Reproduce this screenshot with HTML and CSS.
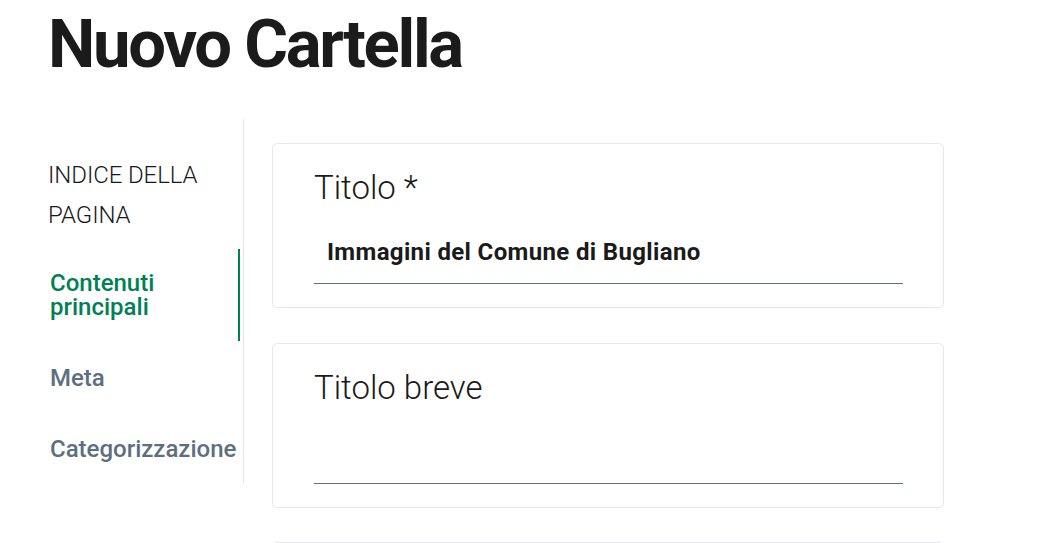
FILE: index.html
```html
<!DOCTYPE html>
<html lang="it">
<head>
<meta charset="utf-8">
<title>Nuovo Cartella</title>
<link rel="stylesheet" href="styles.css">
</head>
<body>
<div class="page">
  <h1 class="page-title">Nuovo Cartella</h1>
  <div class="layout">
    <nav class="toc">
      <div class="toc-title">INDICE DELLA PAGINA</div>
      <ul class="toc-list">
        <li class="toc-item active">Contenuti principali</li>
        <li class="toc-item">Meta</li>
        <li class="toc-item">Categorizzazione</li>
      </ul>
    </nav>
    <main class="fields">
      <section class="card">
        <label class="field-label">Titolo *</label>
        <input class="field-input" type="text" value="Immagini del Comune di Bugliano">
      </section>
      <section class="card">
        <label class="field-label">Titolo breve</label>
        <input class="field-input" type="text" value="">
      </section>
      <section class="card card-next"></section>
    </main>
  </div>
</div>
</body>
</html>
```

FILE: styles.css
```css
* { box-sizing: border-box; }
html, body { margin: 0; padding: 0; background: #fff; }
body {
  font-family: Roboto, "Liberation Sans", sans-serif;
  color: #1a1a1a;
  height: 543px;
  overflow: hidden;
}
.page { padding: 0 48px; }
.page-title {
  margin: 4px 0 0;
  font-size: 67px;
  line-height: 80px;
  font-weight: 700;
  letter-spacing: -2.3px;
  color: #1b1b1b;
}
.layout {
  display: flex;
  margin-top: 35px;
  align-items: flex-start;
}
.toc {
  width: 196px;
  flex: none;
  border-right: 1px solid #e1e2ee;
  padding: 36px 3px 0 0;
  height: 364px;
}
.toc-title {
  font-size: 24px;
  font-weight: 300;
  line-height: 40px;
  color: #1a1a1a;
  letter-spacing: -0.1px;
}
.toc-list {
  list-style: none;
  margin: 14px 0 0;
  padding: 0;
  display: flex;
  flex-direction: column;
  gap: 3px;
}
.toc-item {
  padding: 22px 0 22px 2px;
  font-size: 24px;
  line-height: 24px;
  font-weight: 500;
  color: #5c6f82;
  border-right: 2px solid transparent;
}
.toc-item.active {
  color: #008055;
  border-right-color: #008055;
}
.fields {
  flex: 1;
  padding: 24px 0 0 28px;
  display: flex;
  flex-direction: column;
  gap: 35px;
  max-width: 700px;
}
.card {
  border: 1px solid #e5e6f0;
  border-radius: 5px;
  padding: 24px 40px 22px 41px;
  background: #fff;
  min-height: 165px;
}
.card-next { margin-top: -1px; }
.field-label {
  display: block;
  font-size: 33px;
  line-height: 40px;
  font-weight: 300;
  color: #1a1a1a;
}
.field-input {
  display: block;
  width: 100%;
  height: 76px;
  padding: 30px 0 17px 13px;
  border: none;
  border-bottom: 1px solid #5c6f82;
  font-family: inherit;
  font-size: 24px;
  line-height: 28px;
  font-weight: 700;
  letter-spacing: 0.35px;
  color: #1a1a1a;
  background: transparent;
  outline: none;
  border-radius: 0;
}
```
